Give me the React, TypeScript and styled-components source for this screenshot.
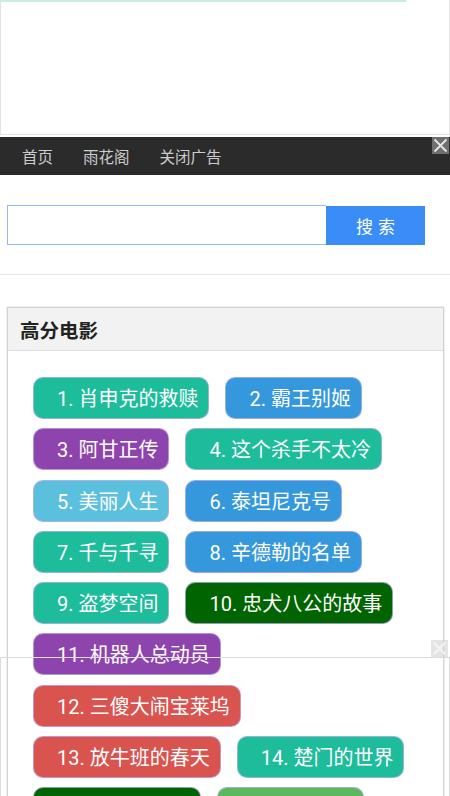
import React from "react";
import styled, { createGlobalStyle } from "styled-components";

const GlobalStyle = createGlobalStyle`
  html, body {
    margin: 0;
    padding: 0;
    background: #ffffff;
    font-family: Roboto, "Noto Sans CJK SC", sans-serif;
  }
`;

let colors = {
  teal: "#1dbc9b",
  blue: "#3598dc",
  purple: "#8e44ad",
  sky: "#5bc0de",
  forest: "#006400",
  red: "#d9534f",
  green: "#5cb85c",
};

type Tone = keyof typeof colors;

let movies: { title: string; tone: Tone }[] = [
  { title: "1. 肖申克的救赎", tone: "teal" },
  { title: "2. 霸王别姬", tone: "blue" },
  { title: "3. 阿甘正传", tone: "purple" },
  { title: "4. 这个杀手不太冷", tone: "teal" },
  { title: "5. 美丽人生", tone: "sky" },
  { title: "6. 泰坦尼克号", tone: "blue" },
  { title: "7. 千与千寻", tone: "teal" },
  { title: "8. 辛德勒的名单", tone: "blue" },
  { title: "9. 盗梦空间", tone: "teal" },
  { title: "10. 忠犬八公的故事", tone: "forest" },
  { title: "11. 机器人总动员", tone: "purple" },
  { title: "12. 三傻大闹宝莱坞", tone: "red" },
  { title: "13. 放牛班的春天", tone: "red" },
  { title: "14. 楚门的世界", tone: "teal" },
  { title: "15. 海上钢琴师", tone: "forest" },
  { title: "16. 星际穿越", tone: "green" },
];

let Page = styled.div`
  width: 100%;
  min-height: 796px;
`;

let AdTop = styled.div`
  position: relative;
  height: 135px;
  background: #fff;
  border: 1px solid #e2e2e2;
  border-top: none;
  box-sizing: border-box;
`;

let Progress = styled.div`
  height: 2px;
  width: 405px;
  background: #c9ece4;
`;

let NavBar = styled.nav`
  position: relative;
  height: 38px;
  margin-top: 2px;
  background: #2b2b2b;
  display: flex;
  align-items: center;
  padding-left: 7px;
`;

let NavItem = styled.a`
  color: #cccccc;
  font-size: 15.5px;
  padding: 0 15px;
  text-decoration: none;
`;

let CloseBox = styled.div<{ $faded?: boolean }>`
  position: absolute;
  right: 1px;
  width: 17px;
  height: 17px;
  background: ${(p) => (p.$faded ? "rgba(205,205,205,0.55)" : "#6f6f6f")};
  display: flex;
  align-items: center;
  justify-content: center;
`;

let SearchRow = styled.div`
  display: flex;
  align-items: flex-start;
  padding: 30px 0 29px 7px;
  border-bottom: 1px solid #e6e6e6;
`;

let SearchInput = styled.input`
  width: 319px;
  height: 40px;
  box-sizing: border-box;
  border: 1px solid #92bbf6;
  border-right: none;
  outline: none;
  margin: 0;
  padding: 0;
`;

let SearchButton = styled.button`
  width: 99px;
  height: 39px;
  margin-top: 1px;
  border: none;
  background: #3a8df6;
  color: #fff;
  font-size: 17px;
  letter-spacing: 5px;
  text-indent: 5px;
  font-family: Roboto, "Noto Sans CJK SC", sans-serif;
`;

let Panel = styled.section`
  margin: 32px 6px 0 7px;
  border: 1px solid #d2d2d2;
  box-shadow: 0 0 0 0.5px #e0e0e0;
`;

let PanelHead = styled.div`
  height: 42px;
  background: #f2f2f2;
  border-bottom: 1px solid #dcdcdc;
  display: flex;
  align-items: center;
  padding-left: 12px;
  font-size: 19.5px;
  font-weight: bold;
  color: #222;
`;

let TagList = styled.div`
  display: flex;
  flex-wrap: wrap;
  gap: 9.25px 16px;
  padding: 26px 20px 30px 25px;
`;

let Tag = styled.a<{ $tone: Tone }>`
  display: flex;
  align-items: center;
  height: 42px;
  box-sizing: border-box;
  padding: 0 10px 1px 23px;
  border-radius: 10px;
  border: 1px solid rgba(190, 175, 235, 0.75);
  background: ${(p) => colors[p.$tone]};
  color: #fff;
  font-size: 20px;
  white-space: nowrap;
  text-decoration: none;
`;

let AdBottom = styled.div`
  position: fixed;
  left: 0;
  right: 0;
  top: 657px;
  bottom: -2px;
  border: 1px solid #dcdcdc;
`;

let Cross = ({ color }: { color: string }) => (
  <svg width="15" height="15" viewBox="0 0 15 15">
    <path d="M1.5 1.5 L13.5 13.5 M13.5 1.5 L1.5 13.5" stroke={color} strokeWidth="1.8" />
  </svg>
);

let App = () => {
  return (
    <Page>
      <GlobalStyle />
      <AdTop>
        <Progress />
      </AdTop>
      <NavBar>
        <NavItem>首页</NavItem>
        <NavItem>雨花阁</NavItem>
        <NavItem>关闭广告</NavItem>
        <CloseBox style={{ top: 0 }}>
          <Cross color="#e6e6e6" />
        </CloseBox>
      </NavBar>
      <SearchRow>
        <SearchInput type="text" />
        <SearchButton>搜索</SearchButton>
      </SearchRow>
      <Panel>
        <PanelHead>高分电影</PanelHead>
        <TagList>
          {movies.map((m) => (
            <Tag key={m.title} $tone={m.tone}>
              {m.title}
            </Tag>
          ))}
        </TagList>
      </Panel>
      <AdBottom>
        <CloseBox $faded style={{ top: -18 }}>
          <Cross color="#f4f4f4" />
        </CloseBox>
      </AdBottom>
    </Page>
  );
};

export default App;
